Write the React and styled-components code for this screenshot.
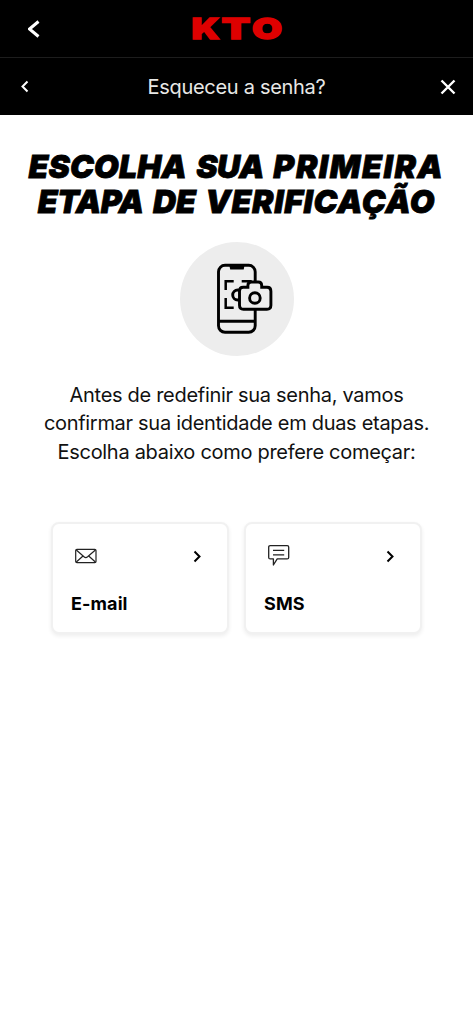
import React from 'react';
import styled, { createGlobalStyle } from 'styled-components';

const GlobalStyle = createGlobalStyle`
  * { box-sizing: border-box; }
  body {
    margin: 0;
    background: #fff;
    color: #000;
    font-family: Inter, "Liberation Sans", sans-serif;
  }
`;

const Page = styled.div`
  min-height: 1024px;
  overflow: hidden;
`;

const TopBar = styled.header`
  display: grid;
  grid-template-columns: 68px 1fr 68px;
  align-items: center;
  height: 58px;
  background: #000;
  border-bottom: 1px solid #1d1d1d;
`;

const SubBar = styled.div`
  display: grid;
  grid-template-columns: 50px 1fr 50px;
  align-items: center;
  height: 57px;
  background: #000;
`;

const IconButton = styled.button`
  display: flex;
  align-items: center;
  justify-content: center;
  padding: 0;
  border: 0;
  background: none;
  color: #fff;
`;

const Logo = styled.div`
  display: flex;
  justify-content: center;
  color: #de0000;
  font-size: 29px;
  font-weight: 900;
  line-height: 30px;
  -webkit-text-stroke: 1.3px #de0000;
`;

// Each letter is stretched by its own factor to get the wide wordmark
const LogoLetter = styled.span`
  display: flex;
  justify-content: center;
  width: ${props => props.$width}px;
  transform: scaleX(${props => props.$stretch});
`;

const BarTitle = styled.h2`
  margin: 0;
  color: #e8e8e6;
  font-size: 20px;
  font-weight: 400;
  letter-spacing: -0.3px;
  line-height: 28px;
  text-align: center;
  white-space: nowrap;
`;

const Content = styled.main`
  display: flex;
  flex-direction: column;
  align-items: center;
  padding-top: 34px;
`;

const Title = styled.h1`
  margin: 0;
  font-size: 32px;
  font-style: italic;
  font-weight: 900;
  line-height: 35px;
  text-align: center;
  -webkit-text-stroke: 0.8px #000;
`;

const TitleLine = styled.span`
  display: block;
  white-space: nowrap;
  word-spacing: 3px;
`;

const Word = styled.span`
  letter-spacing: ${props => props.$spacing}px;
`;

const Badge = styled.div`
  display: flex;
  width: 114px;
  height: 114px;
  margin-top: 23px;
  border-radius: 50%;
  background: #ededed;
`;

const Intro = styled.p`
  margin: 25px 0 0;
  color: #111;
  font-size: 20px;
  letter-spacing: -0.3px;
  line-height: 28.3px;
  text-align: center;
  white-space: nowrap;
`;

const Options = styled.div`
  display: flex;
  gap: 15px;
  margin-top: 56px;
`;

const Card = styled.button`
  display: flex;
  flex-direction: column;
  justify-content: space-between;
  width: 178px;
  height: 112px;
  padding: 18px 19px 15.5px 18px;
  border: 2px solid #f1f1f1;
  border-radius: 8px;
  background: #fff;
  box-shadow: 0 2px 4px rgba(0, 0, 0, 0.07);
  color: #000;
  font-family: inherit;
  text-align: left;
`;

const CardTop = styled.span`
  display: flex;
  align-items: center;
  justify-content: space-between;
  width: 100%;
  padding: 0 7px 0 2px;
`;

const CardArrow = styled.span`
  display: flex;
  padding-top: 2px;
`;

const CardLabel = styled.span`
  font-size: 18px;
  font-weight: 700;
  letter-spacing: 0.1px;
  line-height: 24px;
`;

const Chevron = ({ width, height, stroke, flip }) => (
  <svg width={width} height={height} viewBox={`0 0 ${width} ${height}`} fill="none" stroke="currentColor" strokeWidth={stroke}>
    <path
      d={flip
        ? `M1.5 1.5 L${width - 1.5} ${height / 2} L1.5 ${height - 1.5}`
        : `M${width - 1.5} 1.5 L1.5 ${height / 2} L${width - 1.5} ${height - 1.5}`}
    />
  </svg>
);

const CloseIcon = () => (
  <svg width="16" height="16" viewBox="0 0 16 16" stroke="currentColor" strokeWidth="2.4">
    <path d="M1.5 1.5 L14.5 14.5 M14.5 1.5 L1.5 14.5" />
  </svg>
);

const PhoneCameraIcon = () => (
  <svg width="114" height="114" viewBox="0.3 0 114 114" fill="none" stroke="#000" strokeWidth="2.9">
    <rect x="38.8" y="23.3" width="36.7" height="67" rx="6.5" />
    <path d="M49.5 22.5 H65 L64 27.5 H50.5 Z" fill="#000" stroke="none" />
    <path d="M39 79.3 H75" />
    <path d="M46 48 V39.2 H54 M62 39.2 H72 M46 56 V65.8 H54" strokeWidth="2.5" />
    <circle cx="58" cy="53" r="5" />
    <path
      d="M63.5 45.3 H68.2 V43.5 Q68.2 40 71.7 40 H78.5 Q82 40 82 43.5 V45.3 H87.5 Q91.2 45.3 91.2 49.3 V63.3 Q91.2 67.3 87.2 67.3 H63.8 Q59.8 67.3 59.8 63.3 V49 Q59.8 45.3 63.5 45.3 Z"
      fill="#ededed"
    />
    <circle cx="75.2" cy="56" r="5.3" />
  </svg>
);

const MailIcon = () => (
  <svg width="26" height="28" viewBox="0 0 26 28" fill="none" stroke="#222" strokeWidth="1.2">
    <rect x="2.7" y="7.4" width="20.3" height="13.2" rx="1.2" />
    <path d="M3.3 8 L11 14.8 Q12.8 16.3 14.6 14.8 L22.4 8 M3.3 20 L10 14 M22.4 20 L15.7 14" />
  </svg>
);

const SmsIcon = () => (
  <svg width="26" height="28" viewBox="0 0 26 28" fill="none" stroke="#222" strokeWidth="1.3" strokeLinejoin="round">
    <path d="M4.2 3.6 H21.2 Q22.7 3.6 22.7 5.1 V15.4 Q22.7 16.9 21.2 16.9 H11.2 L7.4 23 V16.9 H4.2 Q2.7 16.9 2.7 15.4 V5.1 Q2.7 3.6 4.2 3.6 Z" />
    <path d="M7 8.4 H18.2 M7 12.8 H18.2" />
  </svg>
);

const options = [
  { label: 'E-mail', icon: MailIcon },
  { label: 'SMS', icon: SmsIcon },
];

const App = () => {
  return (
    <Page>
      <GlobalStyle />
      <TopBar>
        <IconButton aria-label="Voltar">
          <Chevron width={12} height={18} stroke={3} />
        </IconButton>
        <Logo>
          <LogoLetter $width={31} $stretch={1.28}>K</LogoLetter>
          <LogoLetter $width={30} $stretch={1.45}>T</LogoLetter>
          <LogoLetter $width={32} $stretch={1.34}>O</LogoLetter>
        </Logo>
      </TopBar>
      <SubBar>
        <IconButton aria-label="Etapa anterior">
          <Chevron width={8} height={13} stroke={2} />
        </IconButton>
        <BarTitle>Esqueceu a senha?</BarTitle>
        <IconButton aria-label="Fechar">
          <CloseIcon />
        </IconButton>
      </SubBar>
      <Content>
        <Title>
          <TitleLine>
            <Word $spacing={0.1}>ESCOLHA</Word> <Word $spacing={-0.5}>SUA</Word> <Word $spacing={1.6}>PRIMEIRA</Word>
          </TitleLine>
          <TitleLine>
            <Word $spacing={-0.4}>ETAPA</Word> <Word $spacing={0}>DE</Word> <Word $spacing={0.7}>VERIFICAÇÃO</Word>
          </TitleLine>
        </Title>
        <Badge>
          <PhoneCameraIcon />
        </Badge>
        <Intro>
          Antes de redefinir sua senha, vamos<br />
          confirmar sua identidade em duas etapas.<br />
          Escolha abaixo como prefere começar:
        </Intro>
        <Options>
          {options.map(({ label, icon: Icon }) => (
            <Card key={label}>
              <CardTop>
                <Icon />
                <CardArrow>
                  <Chevron width={8} height={13} stroke={2} flip />
                </CardArrow>
              </CardTop>
              <CardLabel>{label}</CardLabel>
            </Card>
          ))}
        </Options>
      </Content>
    </Page>
  );
};

export default App;
